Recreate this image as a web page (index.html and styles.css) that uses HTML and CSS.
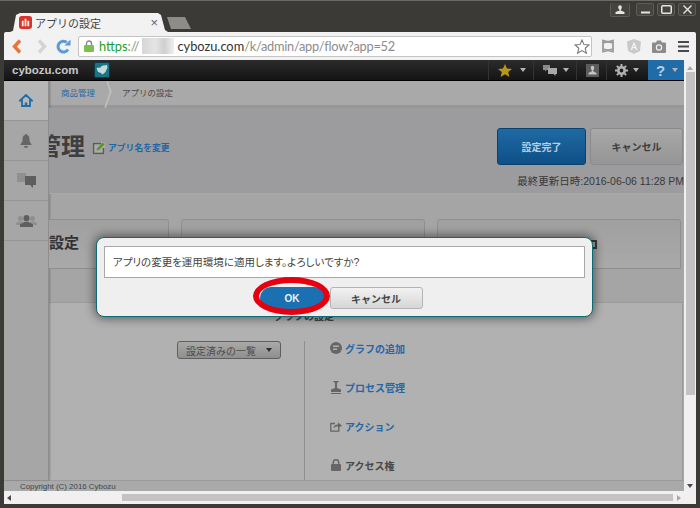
FILE: index.html
```html
<!DOCTYPE html>
<html lang="ja">
<head>
  <meta charset="UTF-8">
  <title>アプリの設定</title>
  <link rel="stylesheet" href="styles.css">
</head>
<body>
  <div class="window">
    <div class="titlebar">
      <div class="tab">
        <svg class="favicon" width="13" height="13" viewBox="0 0 14 14"><rect width="14" height="14" rx="3" fill="#d8342c"/><path d="M3 11V5h2v6zM6 11V3h2v8zM9 11V5h2v6z" fill="#f4e8d8"/></svg>
        <span class="tab-title">アプリの設定</span>
        <span class="tab-close">×</span>
      </div>
      <div class="newtab"></div>
      <div class="winbtns">
        <div class="winbtn person"><svg width="10" height="9" viewBox="0 0 10 9"><path d="M3.2 2a1.8 1.8 0 0 1 3.6 0c0 1.4-.7 2.4-1 2.8v.6L9.5 7v2H.5V7l4.2-1.600v-.6c-.8-.4-1.500-1.400-1.500-2.800z" fill="#e6e6e2"/></svg></div>
        <div class="winbtn"><svg width="9" height="9" viewBox="0 0 9 9"><path d="M0 6.500h9v2H0z" fill="#e6e6e2"/></svg></div>
        <div class="winbtn"><svg width="11" height="9" viewBox="0 0 11 9"><rect x=".75" y=".75" width="9.500" height="7.500" rx="1" fill="none" stroke="#e6e6e2" stroke-width="1.500"/></svg></div>
        <div class="winbtn"><svg width="9" height="9" viewBox="0 0 9 9"><path d="M.5.500l8 8M8.500.500l-8 8" stroke="#e6e6e2" stroke-width="1.400"/></svg></div>
      </div>
    </div>

    <div class="toolbar">
      <svg class="nav back" width="10" height="15" viewBox="0 0 10 15"><path d="M8 1.500L2.500 7.500 8 13.500" fill="none" stroke="#e8743c" stroke-width="3.400"/></svg>
      <svg class="nav forward" width="10" height="15" viewBox="0 0 10 15"><path d="M2 1.500l5.500 6-5.500 6" fill="none" stroke="#d4d4d4" stroke-width="3.400"/></svg>
      <svg class="nav reload" width="15" height="15" viewBox="0 0 15 15"><path d="M12 10.500A5.400 5.400 0 1 1 10.800 3.400" fill="none" stroke="#5a9ad8" stroke-width="3"/><path d="M8.500 6.500L14.500 6.500 14.500.500z" fill="#5a9ad8"/></svg>
      <div class="omnibox">
        <svg class="lock" width="10" height="12" viewBox="0 0 10 12"><path d="M2.500 5V3.500a2.500 2.500 0 0 1 5 0V5" fill="none" stroke="#8a8a8a" stroke-width="1.400"/><rect y="5" width="10" height="7" rx="1" fill="#7cc04c"/></svg>
        <span class="url"><span class="https">https</span><span class="scheme">://</span><span class="blur"></span><span class="domain">cybozu.com</span><span class="path">/k/admin/app/flow?app=52</span></span>
        <svg class="bookmark" width="16" height="15" viewBox="0 0 16 15"><path d="M8 1l2 4.600 5 .4-3.800 3.300 1.200 4.900L8 11.600l-4.400 2.600 1.200-4.900L1 6l5-.4z" fill="#fff" stroke="#777" stroke-width="1.100"/></svg>
      </div>
      <svg class="ext bow" width="12" height="14" viewBox="0 0 12 14"><path d="M1 1.500l10 2.500v6L1 12.500zM11 1.500L1 4v6l10 2.500z" fill="none" stroke="#9b9b9b" stroke-width="1.800"/></svg>
      <svg class="ext ng" width="14" height="15" viewBox="0 0 14 15"><path d="M7 0l7 2.500-1 9.500-6 3-6-3L0 2.500z" fill="#c9c9c9"/><path d="M7 2.500L3.500 11h1.500l.7-1.800h2.600L9 11h1.500zM6.200 8L7 5.800 7.800 8z" fill="#f2f2f2"/></svg>
      <svg class="ext cam" width="14" height="13" viewBox="0 0 14 13"><path d="M1 2.500h3L5 .5h4l1 2h3a1 1 0 0 1 1 1V12a1 1 0 0 1-1 1H1a1 1 0 0 1-1-1V3.500a1 1 0 0 1 1-1z" fill="#8b8b8b"/><circle cx="7" cy="7.500" r="3.200" fill="#f2f2f2"/><circle cx="7" cy="7.500" r="2" fill="#8b8b8b"/></svg>
      <svg class="ext menu" width="11" height="11" viewBox="0 0 11 11"><path d="M0 0h11v2H0zM0 4.500h11v2H0zM0 9h11v2H0z" fill="#4a4a4a"/></svg>
    </div>

    <div class="viewport">
      <div class="content">
        <div class="appbar">
          <span class="brand">cybozu.com</span>
          <svg class="appicon" width="16" height="16" viewBox="0 0 16 16"><rect x=".5" y=".5" width="15" height="15" rx="1.500" fill="#1a7488" stroke="#0a3c48"/><path d="M2.500 6L6.500 5.500 8 3.800 13 3l.5 2.500-2 4.500-3 2.500-1.500-1.500-3-1z" fill="#c4dadd"/></svg>
          <div class="appbar-right">
            <div class="barbtn b-star"><svg width="14" height="13" viewBox="0 0 14 13"><path d="M7 0l2 4.500 5 .4-3.800 3.200L11.400 13 7 10.300 2.600 13l1.200-4.900L0 4.900l5-.4z" fill="#b8961c"/></svg><i class="caret"></i></div>
            <div class="barbtn b-chat"><svg width="14" height="11" viewBox="0 0 14 11"><path d="M0 0h7v5H3.500L2 6.500V5H0z" fill="#8a8a8a"/><path d="M5 3h9v6h-1.500v2L10.500 9H5z" fill="#a8a8a8"/></svg><i class="caret"></i></div>
            <div class="barbtn b-user"><svg width="13" height="13" viewBox="0 0 13 13"><rect width="13" height="13" fill="#5c5c5c"/><path d="M4.800 3.500a1.700 1.700 0 0 1 3.400 0c0 1.300-.5 2.300-1 2.700v1l3.300 1.800v1.500H2.500V9l3.300-1.800v-1c-.5-.4-1-1.400-1-2.700z" fill="#c4c4c4"/></svg></div>
            <div class="barbtn b-gear"><svg width="13" height="13" viewBox="0 0 13 13"><circle cx="6.500" cy="6.500" r="3.200" fill="none" stroke="#b4b4b4" stroke-width="2.600"/><path d="M6.500 0v13M0 6.500h13M1.900 1.900l9.200 9.200M11.100 1.900l-9.200 9.200" stroke="#b4b4b4" stroke-width="2" stroke-dasharray="2.400 8.200 2.400 0"/></svg><i class="caret"></i></div>
            <div class="barbtn b-help"><span class="qmark">?</span><i class="caret"></i></div>
          </div>
        </div>

        <div class="page">
          <div class="columns">
            <nav class="sidebar">
              <div class="side-item active"><svg width="14" height="13" viewBox="0 0 14 13"><path d="M7 1L1 6.500h2V12h8V6.500h2z" fill="none" stroke="#1f6ea8" stroke-width="1.800"/><path d="M5.800 12V8.500h2.400V12z" fill="#1f6ea8"/></svg></div>
              <div class="side-item"><svg width="12" height="14" viewBox="0 0 12 14"><path d="M6 0c.6 0 1 .4 1 1 2 .5 2.500 2.300 2.500 4.500 0 2.200.7 3.500 2 4.500v1H.5v-1c1.300-1 2-2.300 2-4.500C2.500 3.300 3 1.500 5 1c0-.6.4-1 1-1zM4 12h4a2 2 0 0 1-4 0z" fill="#666"/></svg></div>
              <div class="side-item"><svg width="19" height="16" viewBox="0 0 19 16"><path d="M0 0h9v9H3L1.500 10V9H0z" fill="#8f8f8f"/><path d="M8 3h11v9h-3v3l-3-3H8z" fill="#5e5e5e"/></svg></div>
              <div class="side-item"><svg width="21" height="12" viewBox="0 0 21 12"><g fill="#8f8f8f"><circle cx="4.500" cy="3.500" r="2.500"/><path d="M0 10V8l3-1.500h3L8 8v2z"/><circle cx="16.500" cy="3.500" r="2.500"/><path d="M13 10V8l2-1.500h3L21 8v2z"/></g><ellipse cx="10.500" cy="3.200" rx="3" ry="3.200" fill="#5e5e5e"/><path d="M4 12V9.500l4.500-2.500h4L17 9.500V12z" fill="#5e5e5e"/></svg></div>
            </nav>

            <main class="main">
              <div class="crumbs">
                <a class="crumb first">商品管理</a>
                <span class="crumb-sep"></span>
                <span class="crumb">アプリの設定</span>
              </div>
              <div class="head">
                <h1 class="title">商品管理</h1>
                <svg class="edit" width="13" height="13" viewBox="0 0 13 13"><path d="M9 1.500H1.500v10h10V6" fill="none" stroke="#5a5a5a" stroke-width="1.500"/><path d="M4.500 8.500l.5-2L10.500.5 12.500 2.500 7 8z" fill="#5f9622"/></svg>
                <a class="rename">アプリ名を変更</a>
                <div class="head-right">
                  <div class="actions">
                    <button class="btn btn-primary">設定完了</button>
                    <button class="btn btn-plain">キャンセル</button>
                  </div>
                  <p class="updated">最終更新日時:2016-06-06 11:28 PM</p>
                </div>
              </div>
              <div class="cards">
                <div class="card card-first">設定</div>
                <div class="card"></div>
                <div class="card"><i class="card-mark"></i></div>
              </div>
              <section class="panel">
                <div class="panel-head">グラフの設定</div>
                <div class="panel-body">
                  <div class="panel-left">
                    <button class="select">設定済みの一覧<i class="caret dark"></i></button>
                  </div>
                  <ul class="links">
                    <li><svg width="12" height="12" viewBox="0 0 12 12"><circle cx="6" cy="6" r="6" fill="#666"/><path d="M3 3.500h6v1.500H3zM3 6.500h4V8H3z" fill="#b0b0b0"/></svg><a>グラフの追加</a></li>
                    <li><svg width="12" height="13" viewBox="0 0 12 13"><path d="M3.500 0h5v1.500H7v5.500l4 1.500V11H1V8.500L5 7V1.500H3.500zM1 12h10v1H1z" fill="#666"/></svg><a>プロセス管理</a></li>
                    <li><svg width="12" height="11" viewBox="0 0 12 11"><path d="M5 2.500H.8v7.700h8V7" fill="none" stroke="#666" stroke-width="1.300"/><path d="M3.500 7.500c0-2.500 2-4 4.500-4V1.500L12 4.500 8 7.500V5.500c-2 0-3.500.5-4.500 2z" fill="#666"/></svg><a>アクション</a></li>
                    <li><svg width="10" height="12" viewBox="0 0 10 12"><path d="M2.300 5.500V3.500a2.700 2.700 0 0 1 5.400 0v2" fill="none" stroke="#666" stroke-width="1.500"/><rect y="5" width="10" height="7" rx="1" fill="#666"/></svg><span>アクセス権</span></li>
                  </ul>
                </div>
              </section>
            </main>
          </div>
          <footer class="copyright">Copyright (C) 2016 Cybozu</footer>
        </div>
      </div>

      <div class="vscroll">
        <i class="arrow up"></i>
        <div class="vtrack"><div class="vthumb"></div></div>
        <i class="arrow down"></i>
      </div>
    </div>

    <div class="hscroll">
      <i class="arrow left"></i>
      <div class="htrack"><div class="hthumb"></div></div>
      <i class="arrow right"></i>
    </div>

    <div class="dialog">
      <div class="dialog-msg">アプリの変更を運用環境に適用します。よろしいですか?</div>
      <div class="dialog-btns">
        <button class="dbtn dbtn-ok">OK</button>
        <button class="dbtn dbtn-cancel">キャンセル</button>
      </div>
    </div>
    <div class="red-ring"></div>
  </div>
</body>
</html>
```

FILE: styles.css
```css
* { box-sizing: border-box; }
html, body { margin: 0; padding: 0; }
body {
  width: 700px;
  height: 508px;
  overflow: hidden;
  font-family: "Liberation Sans", "Noto Sans CJK JP", sans-serif;
  color: #3c3c3c;
}
ul { list-style: none; margin: 0; padding: 0; }
button { font-family: inherit; cursor: pointer; }

.window {
  position: relative;
  width: 700px;
  height: 508px;
  padding: 0 4px 4px;
  background: #3b3a36;
  border-top: 1px solid #6a6965;
  display: flex;
  flex-direction: column;
}

/* browser chrome */
.titlebar {
  height: 31px;
  display: flex;
  align-items: flex-end;
  padding-left: 6px;
  flex: none;
}
.tab {
  width: 158px;
  height: 19px;
  background: #f2f2f2;
  clip-path: polygon(0 100%, 3px 94%, 6px 10%, 10px 0, 148px 0, 151px 10%, 155px 90%, 158px 100%);
  display: flex;
  align-items: center;
  padding: 0 10px 0 9px;
}
.favicon { flex: none; }
.tab-title { margin-left: 3px; font-size: 11px; color: #444; flex: 1; white-space: nowrap; }
.tab-close { font-size: 13px; color: #666; }
.newtab {
  width: 24px;
  height: 12px;
  margin: 0 0 3px -1px;
  background: #8d8c89;
  clip-path: polygon(0 0, 18px 0, 24px 100%, 4px 100%);
}
.winbtns {
  margin-left: auto;
  align-self: flex-start;
  display: flex;
  gap: 3px;
  padding-top: 2px;
}
.winbtn {
  width: 18px;
  height: 13px;
  border: 1px solid #5d5c58;
  border-radius: 2px;
  background: #45443f;
  display: flex;
  align-items: center;
  justify-content: center;
}
.winbtn.person { width: 20px; margin-right: 3px; border-top: 0; height: 14px; }

.toolbar {
  height: 28px;
  flex: none;
  display: flex;
  align-items: center;
  background: #f2f2f2;
  border-radius: 2px 2px 0 0;
  position: relative;
}
.nav { flex: none; }
.back { margin-left: 8px; }
.forward { margin-left: 15px; }
.reload { margin-left: 9px; }
.omnibox {
  margin-left: 7px;
  width: 514px;
  height: 21px;
  background: #fff;
  border: 1px solid #c4c4c4;
  border-radius: 2px;
  display: flex;
  align-items: center;
  padding: 0 1px 0 5px;
}
.lock { flex: none; }
.url {
  margin-left: 5px;
  font-family: Lato, sans-serif;
  font-size: 12.800px;
  white-space: nowrap;
  flex: 1;
  display: flex;
  align-items: center;
}
.https { color: #1d9c1d; }
.scheme { color: #7f9c7f; }
.blur {
  width: 32px;
  height: 16px;
  margin: 0 3px;
  background: linear-gradient(90deg, #d6d6d6, #e4e4e4 40%, #d0d0d0 70%, #efefef);
}
.domain { color: #333; }
.path { color: #8c8c8c; letter-spacing: -.25px; }
.ext { flex: none; }
.bow { margin-left: 10px; }
.ng { margin-left: 13px; }
.cam { margin-left: 11px; }
.menu { margin-left: 12px; }

.viewport {
  flex: 1;
  min-height: 0;
  display: flex;
}
.content {
  width: 680px;
  display: flex;
  flex-direction: column;
  overflow: hidden;
}
.appbar {
  height: 21px;
  flex: none;
  display: flex;
  align-items: center;
  padding-left: 8px;
  background: linear-gradient(#2c2c2c, #141414);
  border-bottom: 1px solid #000;
}
.brand { font-size: 11.500px; font-weight: bold; color: #c8c8c8; width: 82px; }
.appicon { flex: none; }
.appbar-right { margin-left: auto; display: flex; height: 100%; }
.barbtn {
  height: 100%;
  display: flex;
  align-items: center;
  border-left: 1px solid #333;
  padding-left: 9px;
  gap: 8px;
}
.b-star { width: 45px; }
.b-chat { width: 43px; gap: 6px; }
.b-user { width: 30px; }
.b-gear { width: 42px; gap: 5px; padding-left: 8px; }
.b-help { width: 36px; background: #1f6ca8; border: 0; padding-left: 8px; gap: 7px; }
.qmark { font-size: 15px; font-weight: bold; color: #b8cfe2; line-height: 1; }
.caret {
  width: 0;
  height: 0;
  border-left: 3px solid transparent;
  border-right: 3px solid transparent;
  border-top: 4px solid #b4b4b4;
}
.caret.dark { border-top-color: #2e2e2e; margin-left: 10px; }

/* dimmed page */
.page { flex: 1; display: flex; flex-direction: column; min-height: 0; background: #a7a7a7; }
.columns { height: 399px; flex: none; display: flex; }
.sidebar {
  width: 45px;
  flex: none;
  background: #a6a6a6;
  border-right: 1px solid #8e8e8e;
  box-shadow: 1px 0 2px rgba(0, 0, 0, .25);
  position: relative;
}
.side-item {
  height: 40px;
  border-bottom: 1px solid #959595;
  display: flex;
  align-items: center;
  justify-content: center;
}
.side-item.active { background: #b6b6b6; }

.main { flex: 1; min-width: 0; overflow: hidden; display: flex; flex-direction: column; }
.crumbs {
  height: 27px;
  flex: none;
  display: flex;
  align-items: center;
  padding: 0 0 3px 12px;
  background: #a9a9a9;
  border-bottom: 3px solid #979799;
  font-size: 8.500px;
}
.crumb { color: #4a4a4a; }
.crumb.first { color: #2c68a4; }
.crumb-sep {
  width: 7px;
  height: 7px;
  margin: 0 13px 0 7px;
  border-top: 1px solid #c0c0c0;
  border-right: 1px solid #c0c0c0;
  transform: scaleY(3) rotate(45deg) scale(1.200);
}

.head {
  height: 86px;
  flex: none;
  display: flex;
  background: #9c9c9e;
  border-bottom: 1px solid #a9a9a9;
  position: relative;
}
.title {
  margin: 24px 0 0 -60px;
  font-size: 24px;
  line-height: 30px;
  font-weight: bold;
  color: #3e3e3e;
  white-space: nowrap;
  flex: none;
}
.edit { margin: 34px 0 0 7px; flex: none; background: #aaa; border-radius: 2px; }
.rename { margin: 33px 0 0 3px; font-size: 8.800px; line-height: 15px; color: #1f66a8; font-weight: bold; white-space: nowrap; }
.head-right { margin-left: auto; display: flex; flex-direction: column; align-items: flex-end; padding-top: 20px; }
.actions { display: flex; gap: 4px; padding-right: 1px; }
.btn {
  height: 37px;
  border-radius: 3px;
  font-size: 10px;
  font-weight: bold;
  padding: 0;
}
.btn-primary { width: 89px; color: #b9cee0; background: linear-gradient(#1f6aa4, #0e4f86); border: 1px solid #0a426f; }
.btn-plain { width: 93px; color: #3c3c3c; background: linear-gradient(#a8a8a8, #959595); border: 1px solid #8a8a8a; }
.updated { margin: 10px 0 0; font-size: 10.500px; line-height: 13px; color: #383838; white-space: nowrap; }

.cards {
  height: 108px;
  flex: none;
  display: flex;
  align-items: flex-start;
  gap: 12px;
  padding-top: 25px;
  background: #a5a5a5;
}
.card {
  flex: none;
  width: 244px;
  height: 50px;
  background: linear-gradient(#a0a0a0, #a9a9a9);
  border: 1px solid #8f8f8f;
  border-radius: 3px 3px 0 0;
  position: relative;
}
.card-first {
  width: 120px;
  border-left: 0;
  border-radius: 0 3px 0 0;
  font-size: 15px;
  font-weight: bold;
  color: #333;
  line-height: 46px;
}
.card-mark { position: absolute; left: 150px; top: 20px; width: 9px; height: 9px; border: 2px solid #3a3a3a; }

.panel {
  flex: 1;
  min-height: 0;
  margin: 0 1px 0 0;
  background: #b1b1b1;
  border-top: 1px solid #9a9a9a;
  border-right: 1px solid #9a9a9a;
  display: flex;
  flex-direction: column;
}
.panel-head { height: 38px; flex: none; padding: 5px 0 0 225px; font-size: 10px; font-weight: bold; color: #444; }
.panel-body { flex: 1; display: flex; min-height: 0; }
.panel-left { width: 255px; flex: none; display: flex; justify-content: flex-end; padding-right: 23px; align-items: flex-start; }
.select {
  width: 104px;
  height: 18px;
  padding: 0;
  display: flex;
  align-items: center;
  justify-content: center;
  font-size: 10px;
  color: #4c4c4c;
  background: linear-gradient(#a9a9a9, #8f8f8f);
  border: 1px solid #5f5f5f;
  border-radius: 3px;
}
.links {
  flex: 1;
  border-left: 1px solid #8f8f8f;
  padding: 0 0 0 25px;
  display: flex;
  flex-direction: column;
  gap: 25px;
}
.links li { height: 14px; display: flex; align-items: center; gap: 3px; font-size: 10px; font-weight: bold; color: #484848; white-space: nowrap; }
.links svg { width: 12px; flex: none; }
.links a { color: #2766a6; }

.copyright {
  flex: 1;
  border-top: 1px solid #9b9b9b;
  background: #a9a9a9;
  padding-left: 16px;
  font-size: 7.900px;
  line-height: 11px;
  color: #40474e;
}

/* scrollbars */
.vscroll {
  width: 12px;
  flex: none;
  background: #f0f0f0;
  display: flex;
  flex-direction: column;
  align-items: center;
  padding: 6px 0 3px;
}
.vtrack { flex: 1; width: 100%; padding: 2px 1px 0 2px; }
.vthumb { height: 323px; background: #c3c3c3; }
.hscroll {
  height: 13px;
  flex: none;
  background: #f0f0f0;
  display: flex;
  align-items: center;
  padding: 0 15px 0 3px;
}
.htrack { flex: 1; padding-left: 109px; height: 7px; margin: 0 2px; }
.hthumb { height: 100%; width: 551px; background: #c3c3c3; }
.arrow { flex: none; width: 0; height: 0; }
.arrow.up { border-left: 3px solid transparent; border-right: 3px solid transparent; border-bottom: 4px solid #a8a8a8; }
.arrow.down { border-left: 3px solid transparent; border-right: 3px solid transparent; border-top: 4px solid #4a4a4a; }
.arrow.left { border-top: 3px solid transparent; border-bottom: 3px solid transparent; border-right: 4px solid #4a4a4a; }
.arrow.right { border-top: 3px solid transparent; border-bottom: 3px solid transparent; border-left: 4px solid #a8a8a8; }

/* confirm dialog over the page */
.dialog {
  position: absolute;
  left: 96px;
  top: 236px;
  width: 497px;
  height: 80px;
  padding: 8px 7px;
  background: #efefef;
  border: 1px solid #0e6a74;
  border-radius: 8px;
  box-shadow: 0 0 10px 2px rgba(0, 0, 0, .45);
}
.dialog-msg {
  height: 32px;
  padding-left: 8px;
  background: #fff;
  border: 1px solid #a8a8a8;
  font-size: 10.500px;
  font-feature-settings: "palt";
  line-height: 30px;
  color: #444;
}
.dialog-btns { display: flex; justify-content: center; gap: 5px; margin-top: 9px; padding-right: 7px; }
.dbtn { height: 22px; border-radius: 3px; font-size: 10px; font-weight: bold; padding: 0; }
.dbtn-ok { width: 65px; color: #e8f0f6; background: #1a70b0; border: 1px solid #1a70b0; border-radius: 11px; }
.dbtn-cancel { width: 93px; color: #444; background: linear-gradient(#f2f2f2, #d6d6d6); border: 1px solid #b4b4b4; }
.red-ring {
  position: absolute;
  left: 253px;
  top: 276px;
  width: 77px;
  height: 38px;
  border: 6px solid #e6000f;
  border-radius: 50%;
}
```
